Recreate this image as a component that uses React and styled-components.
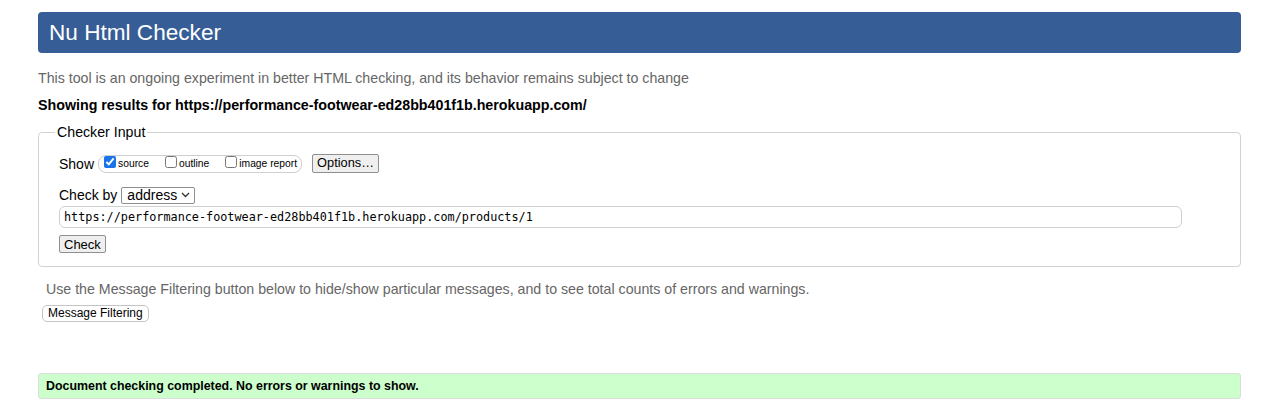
import React from "react";
import styled, { createGlobalStyle } from "styled-components";

const GlobalStyle = createGlobalStyle`
  html, body {
    margin: 0;
    background: #fff;
  }
  body {
    padding: 12px 39px 0 38px;
    font-family: "Liberation Sans", Arial, sans-serif;
    color: #000;
  }
`;

const Header = styled.h1`
  margin: 0;
  height: 41px;
  line-height: 41px;
  padding-left: 11px;
  background: #365d95;
  border-radius: 4px;
  color: #fff;
  font-size: 22.6px;
  font-weight: normal;
`;

const Intro = styled.p`
  margin: 16px 0 0;
  font-size: 14.2px;
  line-height: 18px;
  color: #666;
`;

const Results = styled.h2`
  margin: 9px 0 0;
  font-size: 14.25px;
  line-height: 18px;
  font-weight: bold;
`;

const Fieldset = styled.fieldset`
  margin: 9px 0 0;
  padding: 0 20px 13px;
  border: 1px solid #d2d2d2;
  border-radius: 4px;
  min-width: 0;
`;

const Legend = styled.legend`
  margin-left: -4px;
  padding: 0 2px;
  font-size: 14.2px;
  line-height: 18px;
`;

const Row = styled.div`
  display: flex;
  align-items: center;
  margin-top: ${(p) => p.$top || 0}px;
  height: ${(p) => p.$height || 20}px;
`;

const RowLabel = styled.span`
  font-size: 14px;
  margin-right: ${(p) => p.$gap || 4}px;
`;

const OptionGroup = styled.span`
  display: flex;
  align-items: center;
  height: 16px;
  padding: 0 4px 0 5px;
  border: 1px solid #cfcfcf;
  border-radius: 8px;
  margin-right: 10px;
`;

const Option = styled.label`
  display: flex;
  align-items: center;
  font-size: 10.3px;
  margin-left: ${(p) => (p.$first ? 0 : 16)}px;
`;

const Box = styled.input.attrs({ type: "checkbox" })`
  width: 12px;
  height: 12px;
  margin: 0 2px 0 0;
  accent-color: #1a73e8;
  position: relative;
  top: -2px;
`;

const Button = styled.button`
  font-family: "Liberation Sans", Arial, sans-serif;
  font-size: ${(p) => p.$size || 13}px;
  color: #000;
  height: ${(p) => p.$height || 19}px;
  padding: 0 ${(p) => p.$pad || 5}px;
  background: ${(p) => (p.$light ? "#fff" : "#efefef")};
  border: 1px solid ${(p) => (p.$light ? "#c4c4c4" : "#8f8f8f")};
  border-radius: ${(p) => p.$radius || 2}px;
  line-height: 1;
`;

const SelectWrap = styled.span`
  position: relative;
  display: inline-flex;
`;

const Select = styled.select`
  appearance: none;
  width: 74px;
  height: 17px;
  padding: 0 0 0 5px;
  border: 1px solid #8f8f8f;
  border-radius: 2px;
  background: #fff;
  font-family: "Liberation Sans", Arial, sans-serif;
  font-size: 14px;
  line-height: 15px;
  color: #000;
`;

const Chevron = styled.svg`
  position: absolute;
  right: 5px;
  top: 5px;
  pointer-events: none;
`;

const UrlInput = styled.input`
  display: block;
  box-sizing: border-box;
  width: 1123px;
  height: 22px;
  margin-top: 1px;
  padding: 0 4px;
  border: 1px solid #cfcfcf;
  border-radius: 6px;
  font-family: "DejaVu Sans Mono", "Liberation Mono", monospace;
  font-size: 11.8px;
  color: #000;
`;

const Hint = styled.p`
  margin: 13px 0 0 8px;
  font-size: 14.2px;
  line-height: 18px;
  color: #666;
`;

const FilterWrap = styled.div`
  margin: 5px 0 0 4px;
`;

const Success = styled.div`
  margin-top: 51px;
  height: 26px;
  box-sizing: border-box;
  display: flex;
  align-items: center;
  padding-left: 7px;
  background: #ccffcc;
  border: 1px solid #dcdcdc;
  border-radius: 3px;
  font-size: 12.4px;
  font-weight: bold;
`;

export default function App() {
  return (
    <>
      <GlobalStyle />
      <Header>Nu Html Checker</Header>
      <Intro>
        This tool is an ongoing experiment in better HTML checking, and its behavior remains subject to change
      </Intro>
      <Results>Showing results for https://performance-footwear-ed28bb401f1b.herokuapp.com/</Results>
      <Fieldset>
        <Legend>Checker Input</Legend>
        <Row $top={12} $height={21}>
          <RowLabel>Show</RowLabel>
          <OptionGroup>
            <Option $first>
              <Box defaultChecked />
              source
            </Option>
            <Option>
              <Box />
              outline
            </Option>
            <Option>
              <Box />
              image report
            </Option>
          </OptionGroup>
          <Button $size={12.8} $pad={4}>Options…</Button>
        </Row>
        <Row $top={11} $height={20}>
          <RowLabel $gap={4}>Check by</RowLabel>
          <SelectWrap>
            <Select defaultValue="address">
              <option value="address">address</option>
              <option value="upload">file upload</option>
              <option value="text">text input</option>
            </Select>
            <Chevron width="9" height="6" viewBox="0 0 9 6">
              <path d="M1 1l3.5 3.5L8 1" fill="none" stroke="#333" strokeWidth="1.3" />
            </Chevron>
          </SelectWrap>
        </Row>
        <UrlInput defaultValue="https://performance-footwear-ed28bb401f1b.herokuapp.com/products/1" />
        <Row $top={7} $height={18}>
          <Button $height={18} $pad={4}>Check</Button>
        </Row>
      </Fieldset>
      <Hint>
        Use the Message Filtering button below to hide/show particular messages, and to see total counts of errors and warnings.
      </Hint>
      <FilterWrap>
        <Button $light $height={17} $radius={5} $pad={5} $size={12}>Message Filtering</Button>
      </FilterWrap>
      <Success>Document checking completed. No errors or warnings to show.</Success>
    </>
  );
}
